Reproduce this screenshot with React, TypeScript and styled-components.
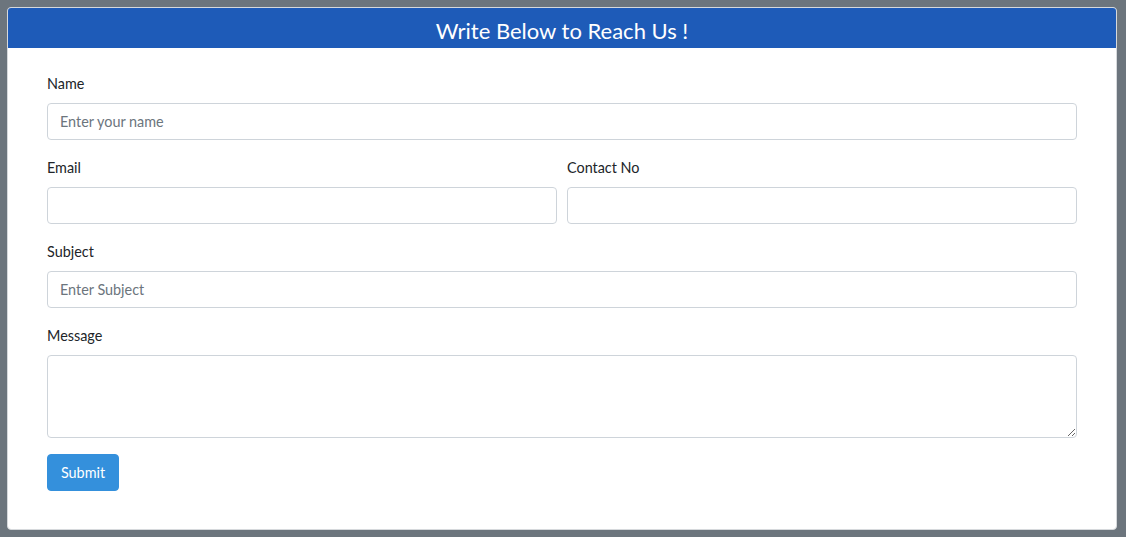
import React from "react";
import styled, { createGlobalStyle } from "styled-components";

const Global = createGlobalStyle`
  * { box-sizing: border-box; }
  html, body { margin: 0; padding: 0; }
  body {
    background: #6c757d;
    font-family: Lato, "Noto Sans", sans-serif;
    font-size: 14.4px;
    line-height: 1.6;
    color: #212529;
  }
`;

const Page = styled.div`
  padding: 7px 9px 7px 7px;
  height: 537px;
`;

const Card = styled.div`
  background: #fff;
  border: 1px solid #d6d9dc;
  border-radius: 4px;
  overflow: hidden;
`;

const Header = styled.div`
  background: #1e5bb8;
  color: #fff;
  text-align: center;
  font-size: 22px;
  line-height: 40px;
  height: 40px;
  padding-top: 3px;
`;

const Body = styled.form`
  padding: 24px 39px 38px 39px;
  display: flex;
  flex-direction: column;
  gap: 16px;
`;

const Group = styled.div`
  display: flex;
  flex-direction: column;
  min-width: 0;
`;

const Row = styled.div`
  display: grid;
  grid-template-columns: 1fr 1fr;
  gap: 10px;
`;

const Label = styled.label`
  display: block;
  margin-bottom: 8px;
  line-height: 23px;
`;

const Input = styled.input`
  width: 100%;
  height: 37px;
  padding: 6px 12px;
  border: 1px solid #ced4da;
  border-radius: 4px;
  font: inherit;
  color: #495057;
  background: #fff;
  &::placeholder { color: #6c757d; opacity: 1; }
`;

const TextArea = styled.textarea`
  width: 100%;
  height: 83px;
  padding: 6px 12px;
  border: 1px solid #ced4da;
  border-radius: 4px;
  font: inherit;
  color: #495057;
  display: block;
  resize: vertical;
`;

const Button = styled.button`
  align-self: flex-start;
  background: #3490dc;
  color: #fff;
  border: 1px solid #3490dc;
  border-radius: 4px;
  padding: 6px 12px;
  font: inherit;
  line-height: 23px;
  height: 37px;
  width: 72px;
`;

export default function App() {
  return (
    <>
      <Global />
      <Page>
        <Card>
          <Header>Write Below to Reach Us !</Header>
          <Body onSubmit={(e) => e.preventDefault()}>
            <Group>
              <Label>Name</Label>
              <Input placeholder="Enter your name" />
            </Group>
            <Row>
              <Group>
                <Label>Email</Label>
                <Input type="email" />
              </Group>
              <Group>
                <Label>Contact No</Label>
                <Input />
              </Group>
            </Row>
            <Group>
              <Label>Subject</Label>
              <Input placeholder="Enter Subject" />
            </Group>
            <Group>
              <Label>Message</Label>
              <TextArea />
            </Group>
            <Button type="submit">Submit</Button>
          </Body>
        </Card>
      </Page>
    </>
  );
}
